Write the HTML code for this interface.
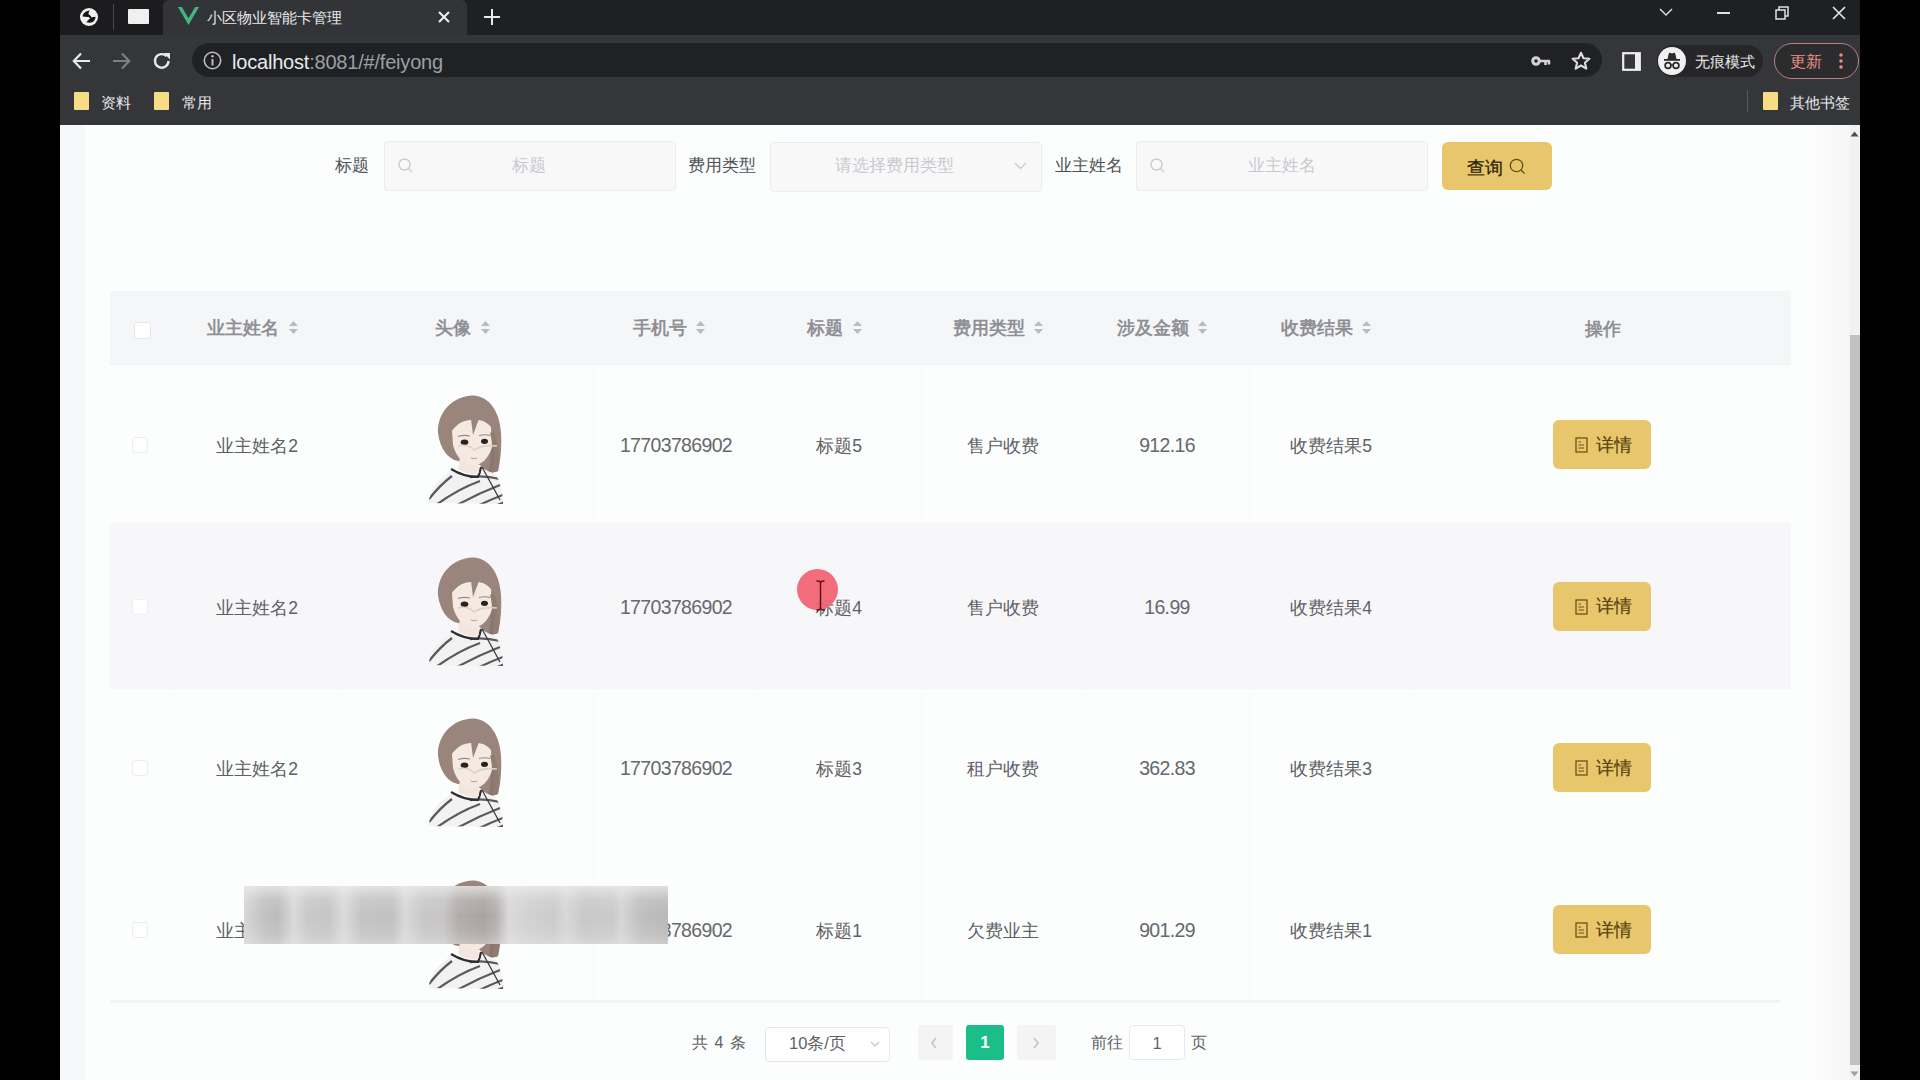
<!DOCTYPE html>
<html><head><meta charset="utf-8">
<style>
*{box-sizing:border-box;margin:0;padding:0}
html,body{width:1920px;height:1080px;overflow:hidden;background:#000;font-family:"Liberation Sans",sans-serif}
.a{position:absolute}
.t{position:absolute;white-space:nowrap;line-height:1}
.c{text-align:center}
svg{position:absolute;overflow:visible}
.inp{position:absolute;height:50px;border:1px solid #eaecef;border-radius:4px;background:#f8f8f9}
.lbl{color:#4e5258;font-size:16.5px}
.ph{color:#c8cacf;font-size:16.5px}
.hd{color:#8e9096;font-size:17.5px;font-weight:bold}
.cell{color:#5e6064;font-size:17.5px}
.num{font-size:19.5px;letter-spacing:-0.65px;color:#66686c}
.btn{position:absolute;background:#e8c66c;border-radius:6px}
</style></head><body>

<!-- ============ BROWSER CHROME ============ -->
<div class="a" style="left:60px;top:0;width:1800px;height:125px;background:#35363a"></div>
<div class="a" style="left:60px;top:0;width:1800px;height:35px;background:#1f2023"></div>
<div class="a" style="left:60px;top:0;width:103px;height:35px;background:#1c1c1e"></div>
<div class="a" style="left:163px;top:0;width:304px;height:35px;background:#333437;border-radius:6px 6px 0 0"></div>
<!-- omnibox -->
<div class="a" style="left:192px;top:43px;width:1410px;height:34px;background:#202124;border-radius:17px"></div>

<!-- globe -->
<svg style="left:79px;top:6.5px" width="20" height="20" viewBox="0 0 20 20">
  <circle cx="10" cy="10" r="9" fill="#f1f1f1"/>
  <path d="M3.6 9.6 C4 6.5 6.5 4 10.8 3.6 C9.8 4.9 9.3 6.3 9.7 7.5 C10.2 8.5 11.3 9.1 12.2 9.8 C9.2 10.3 6.2 10.1 3.6 9.6 Z" fill="#141416"/>
  <path d="M7.4 15.3 C8.6 13.4 10 12.2 11.6 10.9 C13 10.2 14.8 10 16.6 9.8 C16.3 12.2 15.3 14 13.8 15 C11.8 16 9.6 16 7.4 15.3 Z" fill="#141416"/>
  <path d="M9.6 8.2 C10.6 9 11.4 9.8 11.8 11.2" stroke="#141416" stroke-width="2" fill="none"/>
</svg>
<div class="a" style="left:113px;top:4px;width:1px;height:26px;background:#4a4a4d"></div>
<div class="a" style="left:128px;top:9px;width:21px;height:15px;background:#f0f0f0;border-radius:1px"></div>
<!-- vue logo -->
<svg style="left:178px;top:7px" width="21" height="18" viewBox="0 0 21 18">
  <path d="M0 0 L4 0 L10.5 11 L17 0 L21 0 L10.5 18 Z" fill="#41b883"/>
  <path d="M4 0 L7.5 0 L10.5 5 L13.5 0 L17 0 L10.5 11 Z" fill="#35363a"/>
</svg>
<div class="t" style="left:207px;top:10px;font-size:15.2px;color:#e8eaed">小区物业智能卡管理</div>
<svg style="left:438px;top:11px" width="12" height="12" viewBox="0 0 12 12"><path d="M1 1 L11 11 M11 1 L1 11" stroke="#f0f0f0" stroke-width="2"/></svg>
<svg style="left:484px;top:9px" width="16" height="16" viewBox="0 0 16 16"><path d="M8 0 V16 M0 8 H16" stroke="#e8eaed" stroke-width="2"/></svg>

<!-- window controls -->
<svg style="left:1659px;top:8px" width="14" height="9" viewBox="0 0 14 9"><path d="M1 1 L7 7 L13 1" stroke="#d8d8d8" stroke-width="1.5" fill="none"/></svg>
<div class="a" style="left:1717px;top:12px;width:13px;height:1.5px;background:#e0e0e0"></div>
<svg style="left:1775px;top:6px" width="14" height="14" viewBox="0 0 14 14"><path d="M1 4 H10 V13 H1 Z M4 4 V1 H13 V10 H10" stroke="#e0e0e0" stroke-width="1.5" fill="none"/></svg>
<svg style="left:1832px;top:6px" width="14" height="14" viewBox="0 0 14 14"><path d="M1 1 L13 13 M13 1 L1 13" stroke="#e8e8e8" stroke-width="1.6"/></svg>

<!-- nav buttons -->
<svg style="left:72px;top:52px" width="19" height="18" viewBox="0 0 19 18"><path d="M18 9 H2 M9 1.5 L1.8 9 L9 16.5" stroke="#e8eaed" stroke-width="2.2" fill="none"/></svg>
<svg style="left:112px;top:52px" width="19" height="18" viewBox="0 0 19 18"><path d="M1 9 H17 M10 1.5 L17.2 9 L10 16.5" stroke="#7e7f82" stroke-width="2.2" fill="none"/></svg>
<svg style="left:152px;top:51px" width="20" height="20" viewBox="0 0 20 20"><path d="M16.5 10 A6.8 6.8 0 1 1 14.6 5.2" stroke="#e8eaed" stroke-width="2.4" fill="none"/><path d="M11.5 2 L18 2 L18 8.5 Z" fill="#e8eaed"/></svg>
<svg style="left:203px;top:51px" width="19" height="19" viewBox="0 0 19 19"><circle cx="9.5" cy="9.5" r="8.2" stroke="#bdbdbd" stroke-width="1.6" fill="none"/><path d="M9.5 8 V14.5" stroke="#bdbdbd" stroke-width="2"/><circle cx="9.5" cy="5.3" r="1.2" fill="#bdbdbd"/></svg>
<div class="t" style="left:232px;top:51.5px;font-size:20px;color:#e8eaed;letter-spacing:-0.2px">localhost<span style="color:#9aa0a6">:8081/#/feiyong</span></div>

<!-- right omnibox icons -->
<svg style="left:1531px;top:55px" width="20" height="12" viewBox="0 0 20 12"><circle cx="5" cy="6" r="3.3" stroke="#d4d4d4" stroke-width="3" fill="none"/><path d="M8.5 6 H19 M14.5 6 V10 M18 6 V9.5" stroke="#d4d4d4" stroke-width="2.6"/></svg>
<svg style="left:1571px;top:51px" width="20" height="20" viewBox="0 0 20 20"><path d="M10 1.8 L12.5 7.3 L18.4 7.8 L13.9 11.7 L15.3 17.6 L10 14.5 L4.7 17.6 L6.1 11.7 L1.6 7.8 L7.5 7.3 Z" stroke="#dcdcdc" stroke-width="2.1" fill="none" stroke-linejoin="round"/></svg>
<svg style="left:1622px;top:52px" width="19" height="19" viewBox="0 0 19 19"><rect x="1.2" y="1.2" width="16.6" height="16.6" stroke="#eeeeee" stroke-width="2.2" fill="none"/><rect x="13" y="1" width="5" height="17" fill="#eeeeee"/></svg>
<!-- incognito -->
<div class="a" style="left:1657px;top:45px;width:106px;height:32px;background:#262629;border-radius:16px"></div>
<svg style="left:1658px;top:47px" width="28" height="28" viewBox="0 0 28 28"><circle cx="14" cy="14" r="14" fill="#f1f1f1"/><path d="M9.5 12 L10.8 6.5 Q11 5.6 12 5.8 L14 6.4 L16 5.8 Q17 5.6 17.2 6.5 L18.5 12 Z" fill="#2a2a2c"/><rect x="6" y="12" width="16" height="1.8" fill="#2a2a2c"/><circle cx="10" cy="18.5" r="2.9" stroke="#2a2a2c" stroke-width="1.7" fill="none"/><circle cx="18" cy="18.5" r="2.9" stroke="#2a2a2c" stroke-width="1.7" fill="none"/><path d="M12.9 18.2 Q14 17.4 15.1 18.2" stroke="#2a2a2c" stroke-width="1.3" fill="none"/></svg>
<div class="t" style="left:1695px;top:54px;font-size:15px;color:#e8eaed">无痕模式</div>
<!-- update pill -->
<div class="a" style="left:1774px;top:43px;width:85px;height:36px;border:1.5px solid #b9817f;border-radius:18px;background:#2c2b2e"></div>
<div class="t" style="left:1790px;top:54px;font-size:15.5px;color:#e58f89">更新</div>
<svg style="left:1838px;top:52px" width="6" height="18" viewBox="0 0 6 18"><circle cx="3" cy="3" r="1.8" fill="#ee8a83"/><circle cx="3" cy="9" r="1.8" fill="#ee8a83"/><circle cx="3" cy="15" r="1.8" fill="#ee8a83"/></svg>

<!-- bookmarks bar -->
<div class="a" style="left:74px;top:92px;width:15px;height:18px;background:#f6dc85;border-radius:1px"></div>
<div class="t" style="left:101px;top:95px;font-size:15px;color:#e8eaed">资料</div>
<div class="a" style="left:154px;top:92px;width:15px;height:18px;background:#f6dc85;border-radius:1px"></div>
<div class="t" style="left:182px;top:95px;font-size:15px;color:#e8eaed">常用</div>
<div class="a" style="left:1747px;top:90px;width:1px;height:22px;background:#5a5a5e"></div>
<div class="a" style="left:1763px;top:92px;width:15px;height:18px;background:#f6dc85;border-radius:1px"></div>
<div class="t" style="left:1790px;top:95px;font-size:15.2px;color:#e8eaed">其他书签</div>

<!-- ============ PAGE ============ -->
<div class="a" style="left:60px;top:125px;width:1800px;height:955px;background:#fcfdfd"></div>
<div class="a" style="left:60px;top:125px;width:25px;height:955px;background:#f7f8f9"></div>
<div class="a" style="left:1815px;top:125px;width:35px;height:955px;background:linear-gradient(to right,#fcfcfd,#f6f6f8)"></div>


<svg width="0" height="0" style="position:absolute">
<defs>
<filter id="sf"><feGaussianBlur stdDeviation="0.35"/></filter>
<g id="av">
  <!-- hair back -->
  <path d="M10 38 C9 18 24 1 45 0.5 C62 1 72 18 73 38 C74 54 72 68 70 76 L58 78 L52 70 L30 66 C20 64 12 54 10 38 Z" fill="#9a857c"/>
  <path d="M62 32 C68 44 70 60 70 76 L60 78 C64 64 64 48 62 32 Z" fill="#8a766e"/>
  <!-- shirt -->
  <clipPath id="sc"><path d="M0.5 108 C2 96 8 86 18 80 L24 74 L40 80 L52 72 L68 80 C73 88 75 98 75 109 Z"/></clipPath>
  <path d="M0.5 108 C2 96 8 86 18 80 L24 74 L40 80 L52 72 L68 80 C73 88 75 98 75 109 Z" fill="#f3f2f3"/>
  <g clip-path="url(#sc)" stroke="#5a5a5e" stroke-width="2.3" fill="none">
    <path d="M1 104 Q12 90 24 81 M8 110 Q30 94 52 86 M22 114 Q46 100 72 90 M40 116 Q58 106 80 98 M58 116 Q68 110 80 106 M42 82 Q56 80 72 84"/>
  </g>
  <path d="M23 74 Q36 82 50 82 Q52 78 53 72" stroke="#2d2d31" stroke-width="2.1" fill="none"/>
  <!-- neck -->
  <path d="M32 62 L50 64 L51 78 Q40 81 30 74 Z" fill="#f2e6de"/>
  <!-- face -->
  <path d="M24 36 C27 24 56 20 63 32 L64 52 C61 63 53 70.5 45.5 70.5 C36 70 28 62 25 50 Z" fill="#f4eae2"/>
  <!-- bangs -->
  <path d="M22 38 C25 20 36 10 50 11 C58 13 63 22 65 34 C60 28 55 25 51 24 L45 40 L43 24 C36 24 28 30 22 38 Z" fill="#9a857c"/>
  <path d="M62 38 C66 52 67 64 64 78 L70 76 C72 62 70 48 66 36 Z" fill="#8f7b72"/>
  <!-- eyes -->
  <ellipse cx="36.5" cy="47.3" rx="3.8" ry="2.7" fill="#2c2320"/>
  <ellipse cx="56.5" cy="46.3" rx="3.5" ry="2.6" fill="#2c2320"/>
  <path d="M30 41.5 Q36 39.5 42 41 M51 40.5 Q57 39 62 40.5" stroke="#9c887c" stroke-width="1.1" fill="none"/>
  <!-- glasses -->
  <path d="M30 51 C36 49 43 51 46 55 C52 51 60 50 69 51" stroke="#dcd2c8" stroke-width="1.6" fill="none"/>
  <path d="M43 63 Q46 64.5 49 63" stroke="#d09a92" stroke-width="1.2" fill="none"/>
  <path d="M54 72 L72 105" stroke="#3a3a3e" stroke-width="1.3"/>
</g>
</defs>
</svg>

<!-- search row -->
<div class="t lbl" style="left:335px;top:157px">标题</div>
<div class="inp" style="left:384px;top:141px;width:292px"></div>
<svg style="left:398px;top:158px" width="15" height="15" viewBox="0 0 15 15"><circle cx="6.5" cy="6.5" r="5.5" stroke="#c9cbd0" stroke-width="1.4" fill="none"/><path d="M10.5 10.5 L14 14" stroke="#c9cbd0" stroke-width="1.4"/></svg>
<div class="t ph" style="left:512px;top:157px">标题</div>
<div class="t lbl" style="left:688px;top:157px">费用类型</div>
<div class="inp" style="left:770px;top:142px;width:272px"></div>
<div class="t ph" style="left:835px;top:157px">请选择费用类型</div>
<svg style="left:1014px;top:162px" width="13" height="8" viewBox="0 0 13 8"><path d="M1 1 L6.5 6.5 L12 1" stroke="#c9cbd0" stroke-width="1.4" fill="none"/></svg>
<div class="t lbl" style="left:1055px;top:157px">业主姓名</div>
<div class="inp" style="left:1136px;top:141px;width:292px"></div>
<svg style="left:1150px;top:158px" width="15" height="15" viewBox="0 0 15 15"><circle cx="6.5" cy="6.5" r="5.5" stroke="#c9cbd0" stroke-width="1.4" fill="none"/><path d="M10.5 10.5 L14 14" stroke="#c9cbd0" stroke-width="1.4"/></svg>
<div class="t ph" style="left:1248px;top:157px">业主姓名</div>
<div class="btn" style="left:1442px;top:142px;width:110px;height:48px"></div>
<div class="t" style="left:1467px;top:160px;font-size:17.5px;color:#2a1f05;-webkit-text-stroke:0.25px #2a1f05">查询</div>
<svg style="left:1509px;top:158px" width="17" height="17" viewBox="0 0 17 17"><circle cx="7.5" cy="7.5" r="6.2" stroke="#5e4c1c" stroke-width="1.3" fill="none"/><path d="M12 12 L15.5 15.5" stroke="#5e4c1c" stroke-width="1.3"/></svg>

<!-- table -->
<div class="a" style="left:110px;top:291px;width:1681px;height:73px;background:#f5f6f8"></div>
<div class="a" style="left:110px;top:523px;width:1681px;height:166px;background:#f7f7f9"></div>
<div class="a" style="left:110px;top:364px;width:1681px;height:1px;background:#f0f1f3"></div>
<div class="a" style="left:110px;top:1000px;width:1670px;height:3px;background:#f4f4f6"></div>
<div class="a" style="left:173px;top:364px;width:1px;height:636px;background:#f9f9fa"></div>
<div class="a" style="left:341px;top:364px;width:1px;height:636px;background:#f9f9fa"></div>
<div class="a" style="left:593px;top:364px;width:1px;height:636px;background:#f9f9fa"></div>
<div class="a" style="left:757px;top:364px;width:1px;height:636px;background:#f9f9fa"></div>
<div class="a" style="left:921px;top:364px;width:1px;height:636px;background:#f9f9fa"></div>
<div class="a" style="left:1085px;top:364px;width:1px;height:636px;background:#f9f9fa"></div>
<div class="a" style="left:1249px;top:364px;width:1px;height:636px;background:#f9f9fa"></div>
<div class="a" style="left:1413px;top:364px;width:1px;height:636px;background:#f9f9fa"></div>

<div class="a" style="left:134px;top:322px;width:17px;height:17px;border:1px solid #e4e6ea;border-radius:3px;background:#fff"></div>
<div class="t hd" style="left:207px;top:320px">业主姓名</div>
<svg style="left:288px;top:320px" width="11" height="15" viewBox="0 0 11 15"><path d="M5.5 1 L10 6 H1 Z M5.5 14 L10 9 H1 Z" fill="#b9bbc0"/></svg>
<div class="t hd" style="left:435px;top:320px">头像</div>
<svg style="left:480px;top:320px" width="11" height="15" viewBox="0 0 11 15"><path d="M5.5 1 L10 6 H1 Z M5.5 14 L10 9 H1 Z" fill="#b9bbc0"/></svg>
<div class="t hd" style="left:633px;top:320px">手机号</div>
<svg style="left:695px;top:320px" width="11" height="15" viewBox="0 0 11 15"><path d="M5.5 1 L10 6 H1 Z M5.5 14 L10 9 H1 Z" fill="#b9bbc0"/></svg>
<div class="t hd" style="left:807px;top:320px">标题</div>
<svg style="left:852px;top:320px" width="11" height="15" viewBox="0 0 11 15"><path d="M5.5 1 L10 6 H1 Z M5.5 14 L10 9 H1 Z" fill="#b9bbc0"/></svg>
<div class="t hd" style="left:953px;top:320px">费用类型</div>
<svg style="left:1033px;top:320px" width="11" height="15" viewBox="0 0 11 15"><path d="M5.5 1 L10 6 H1 Z M5.5 14 L10 9 H1 Z" fill="#b9bbc0"/></svg>
<div class="t hd" style="left:1117px;top:320px">涉及金额</div>
<svg style="left:1197px;top:320px" width="11" height="15" viewBox="0 0 11 15"><path d="M5.5 1 L10 6 H1 Z M5.5 14 L10 9 H1 Z" fill="#b9bbc0"/></svg>
<div class="t hd" style="left:1281px;top:320px">收费结果</div>
<svg style="left:1361px;top:320px" width="11" height="15" viewBox="0 0 11 15"><path d="M5.5 1 L10 6 H1 Z M5.5 14 L10 9 H1 Z" fill="#b9bbc0"/></svg>
<div class="t hd" style="left:1585px;top:321px">操作</div>
<div class="a" style="left:132px;top:437px;width:16px;height:16px;border:1px solid #eceef1;border-radius:3px;background:#fff"></div>
<div class="t cell c" style="left:157px;width:200px;top:437.9px">业主姓名2</div>
<div class="t cell c num" style="left:576px;width:200px;top:435.9px">17703786902</div>
<div class="t cell c" style="left:739px;width:200px;top:437.9px">标题5</div>
<div class="t cell c" style="left:903px;width:200px;top:437.9px">售户收费</div>
<div class="t cell c num" style="left:1067px;width:200px;top:435.9px">912.16</div>
<div class="t cell c" style="left:1231px;width:200px;top:437.9px">收费结果5</div>
<div class="btn" style="left:1553px;top:420px;width:98px;height:49px"></div>
<svg style="left:1575px;top:437px" width="13" height="16" viewBox="0 0 13 16"><rect x="1" y="1" width="11" height="14" stroke="#6e5214" stroke-width="1.3" fill="none"/><path d="M3.5 5 H6 M3.5 8 H9 M3.5 11 H9" stroke="#6e5214" stroke-width="1.1"/></svg>
<div class="t" style="left:1596px;top:436.7px;font-size:17.5px;color:#5a4210;-webkit-text-stroke:0.2px #5a4210">详情</div>
<svg style="left:428px;top:395px" width="76" height="110" viewBox="0 0 76 110"><use href="#av" filter="url(#sf)"/></svg>
<div class="a" style="left:132px;top:599px;width:16px;height:16px;border:1px solid #eceef1;border-radius:3px;background:#fff"></div>
<div class="t cell c" style="left:157px;width:200px;top:599.5px">业主姓名2</div>
<div class="t cell c num" style="left:576px;width:200px;top:597.5px">17703786902</div>
<div class="t cell c" style="left:739px;width:200px;top:599.5px">标题4</div>
<div class="t cell c" style="left:903px;width:200px;top:599.5px">售户收费</div>
<div class="t cell c num" style="left:1067px;width:200px;top:597.5px">16.99</div>
<div class="t cell c" style="left:1231px;width:200px;top:599.5px">收费结果4</div>
<div class="btn" style="left:1553px;top:582px;width:98px;height:49px"></div>
<svg style="left:1575px;top:599px" width="13" height="16" viewBox="0 0 13 16"><rect x="1" y="1" width="11" height="14" stroke="#6e5214" stroke-width="1.3" fill="none"/><path d="M3.5 5 H6 M3.5 8 H9 M3.5 11 H9" stroke="#6e5214" stroke-width="1.1"/></svg>
<div class="t" style="left:1596px;top:598.3px;font-size:17.5px;color:#5a4210;-webkit-text-stroke:0.2px #5a4210">详情</div>
<svg style="left:428px;top:557px" width="76" height="110" viewBox="0 0 76 110"><use href="#av" filter="url(#sf)"/></svg>
<div class="a" style="left:132px;top:760px;width:16px;height:16px;border:1px solid #eceef1;border-radius:3px;background:#fff"></div>
<div class="t cell c" style="left:157px;width:200px;top:761.1px">业主姓名2</div>
<div class="t cell c num" style="left:576px;width:200px;top:759.1px">17703786902</div>
<div class="t cell c" style="left:739px;width:200px;top:761.1px">标题3</div>
<div class="t cell c" style="left:903px;width:200px;top:761.1px">租户收费</div>
<div class="t cell c num" style="left:1067px;width:200px;top:759.1px">362.83</div>
<div class="t cell c" style="left:1231px;width:200px;top:761.1px">收费结果3</div>
<div class="btn" style="left:1553px;top:743px;width:98px;height:49px"></div>
<svg style="left:1575px;top:760px" width="13" height="16" viewBox="0 0 13 16"><rect x="1" y="1" width="11" height="14" stroke="#6e5214" stroke-width="1.3" fill="none"/><path d="M3.5 5 H6 M3.5 8 H9 M3.5 11 H9" stroke="#6e5214" stroke-width="1.1"/></svg>
<div class="t" style="left:1596px;top:759.9px;font-size:17.5px;color:#5a4210;-webkit-text-stroke:0.2px #5a4210">详情</div>
<svg style="left:428px;top:718px" width="76" height="110" viewBox="0 0 76 110"><use href="#av" filter="url(#sf)"/></svg>
<div class="a" style="left:132px;top:922px;width:16px;height:16px;border:1px solid #eceef1;border-radius:3px;background:#fff"></div>
<div class="t cell c" style="left:157px;width:200px;top:922.7px">业主姓名2</div>
<div class="t cell c num" style="left:576px;width:200px;top:920.7px">17703786902</div>
<div class="t cell c" style="left:739px;width:200px;top:922.7px">标题1</div>
<div class="t cell c" style="left:903px;width:200px;top:922.7px">欠费业主</div>
<div class="t cell c num" style="left:1067px;width:200px;top:920.7px">901.29</div>
<div class="t cell c" style="left:1231px;width:200px;top:922.7px">收费结果1</div>
<div class="btn" style="left:1553px;top:905px;width:98px;height:49px"></div>
<svg style="left:1575px;top:922px" width="13" height="16" viewBox="0 0 13 16"><rect x="1" y="1" width="11" height="14" stroke="#6e5214" stroke-width="1.3" fill="none"/><path d="M3.5 5 H6 M3.5 8 H9 M3.5 11 H9" stroke="#6e5214" stroke-width="1.1"/></svg>
<div class="t" style="left:1596px;top:921.5px;font-size:17.5px;color:#5a4210;-webkit-text-stroke:0.2px #5a4210">详情</div>
<svg style="left:428px;top:880px" width="76" height="110" viewBox="0 0 76 110"><use href="#av" filter="url(#sf)"/></svg>

<!-- pagination -->
<div class="t" style="left:692px;top:1035px;font-size:16px;color:#606266;word-spacing:2px">共 4 条</div>
<div class="a" style="left:765px;top:1027px;width:125px;height:35px;border:1px solid #e6e8ec;border-radius:4px;background:#fff"></div>
<div class="t" style="left:789px;top:1035px;font-size:16.5px;color:#606266">10条/页</div>
<svg style="left:870px;top:1041px" width="10" height="6" viewBox="0 0 10 6"><path d="M1 1 L5 5 L9 1" stroke="#c0c4cc" stroke-width="1.2" fill="none"/></svg>
<div class="a" style="left:918px;top:1025px;width:35px;height:35px;background:#f4f4f5;border-radius:3px"></div>
<svg style="left:930px;top:1037px" width="8" height="12" viewBox="0 0 8 12"><path d="M6 1 L2 6 L6 11" stroke="#c0c4cc" stroke-width="1.6" fill="none"/></svg>
<div class="a" style="left:966px;top:1025px;width:38px;height:35px;background:#1bbd88;border-radius:3px"></div>
<div class="t" style="left:966px;width:38px;top:1034px;font-size:17px;font-weight:bold;color:#fff;text-align:center">1</div>
<div class="a" style="left:1017px;top:1025px;width:39px;height:35px;background:#f4f4f5;border-radius:3px"></div>
<svg style="left:1032px;top:1037px" width="8" height="12" viewBox="0 0 8 12"><path d="M2 1 L6 6 L2 11" stroke="#c0c4cc" stroke-width="1.6" fill="none"/></svg>
<div class="t" style="left:1091px;top:1035px;font-size:16px;color:#606266">前往</div>
<div class="a" style="left:1129px;top:1025px;width:56px;height:35px;border:1px solid #e6e8ec;border-radius:4px;background:#fff"></div>
<div class="t" style="left:1129px;width:56px;top:1035px;font-size:16.5px;color:#606266;text-align:center">1</div>
<div class="t" style="left:1191px;top:1035px;font-size:16px;color:#606266">页</div>

<!-- scrollbar -->
<div class="a" style="left:1850px;top:125px;width:10px;height:955px;background:#f1f1f1"></div>
<div class="a" style="left:1850px;top:335px;width:10px;height:730px;background:#c1c1c1"></div>
<svg style="left:1850px;top:131px" width="9" height="6" viewBox="0 0 9 6"><path d="M0.5 5.5 L4.5 0.5 L8.5 5.5 Z" fill="#505050"/></svg>
<svg style="left:1850px;top:1071px" width="9" height="6" viewBox="0 0 9 6"><path d="M0.5 0.5 L4.5 5.5 L8.5 0.5 Z" fill="#a0a0a0"/></svg>

<!-- blurred overlay -->
<div class="a" style="left:244px;top:886px;width:424px;height:58px;background:linear-gradient(to right,#d8d7d8 0px,#c2c1c2 20px,#bdbcbd 34px,#dad9da 50px,#c9c8c9 64px,#c6c5c6 84px,#dbdada 100px,#c4c3c4 118px,#c2c1c2 148px,#d9d8d9 161px,#c8c7c8 180px,#c6c4c4 200px,#b3abab 215px,#aaa2a2 240px,#b5afaf 252px,#dad9da 265px,#d2d1d2 285px,#cccbcc 310px,#d8d7d8 322px,#c9c8c9 340px,#cbcacb 368px,#d6d5d6 378px,#c0bfc0 396px,#bab9ba 418px)"></div>
<div class="a" style="left:244px;top:886px;width:424px;height:58px;background:linear-gradient(to bottom,rgba(240,240,240,.7) 0px,rgba(240,240,240,.15) 14px,rgba(240,240,240,0) 30px,rgba(240,240,240,.1) 46px,rgba(240,240,240,.35) 58px)"></div>

<!-- cursor highlight -->
<div class="a" style="left:797px;top:569px;width:41px;height:41px;border-radius:50%;background:#f26070;opacity:0.92"></div>
<svg style="left:815px;top:579px" width="11" height="33" viewBox="0 0 11 33"><path d="M1.5 2 Q5.5 1.5 5.5 4.5 Q5.5 1.5 9.5 2 M5.5 4.5 V28.5 M1.5 31 Q5.5 31.5 5.5 28.5 Q5.5 31.5 9.5 31" stroke="#5a0d12" stroke-width="1.4" fill="none"/></svg>
</body></html>
